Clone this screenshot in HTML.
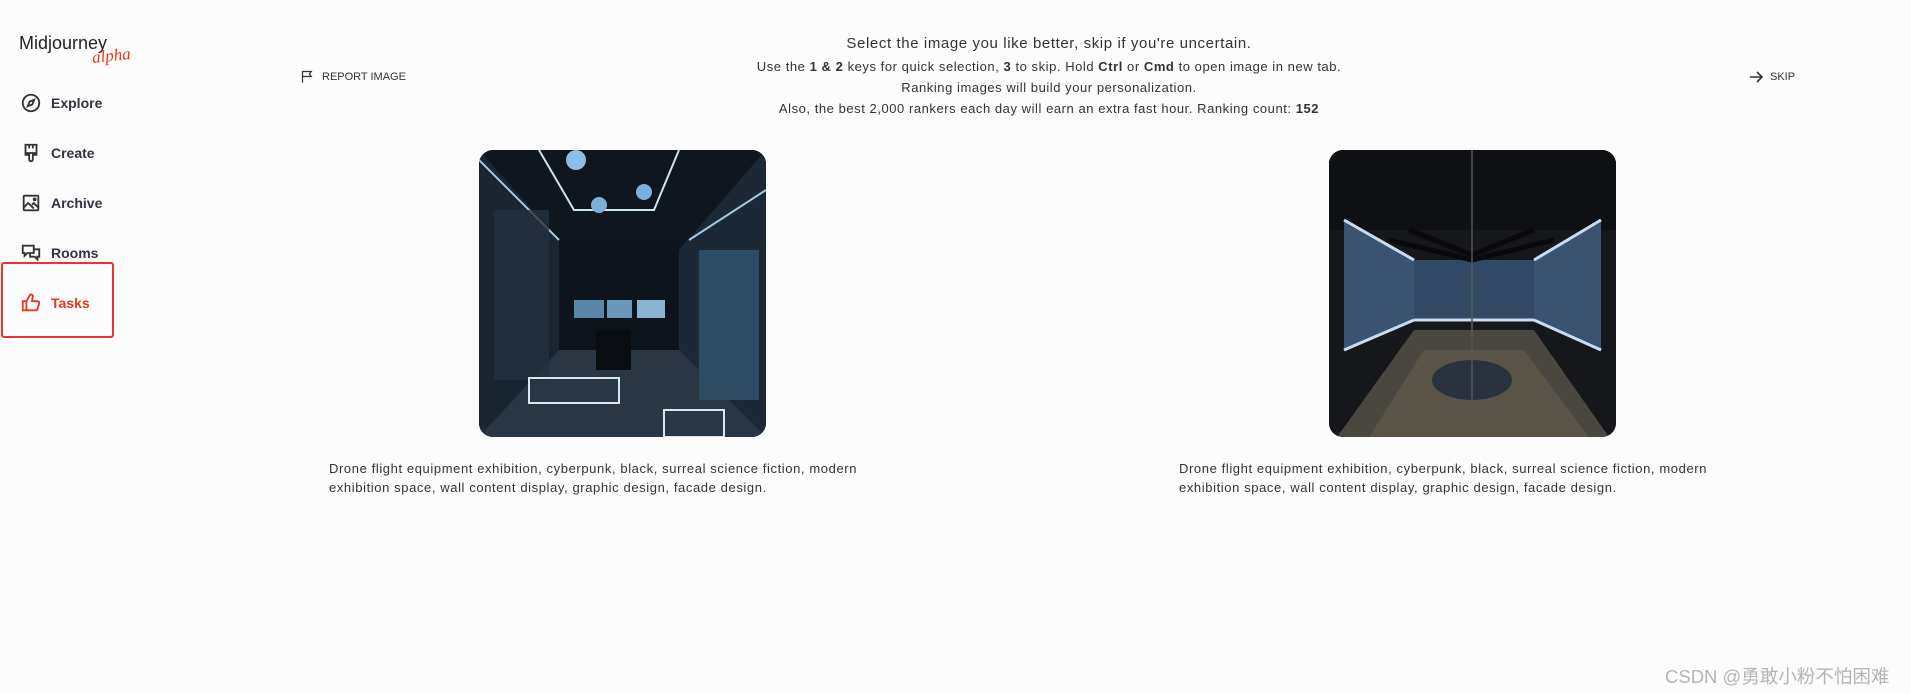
<!DOCTYPE html>
<html><head><meta charset="utf-8"><style>
*{margin:0;padding:0;box-sizing:border-box}
body{width:1911px;height:693px;background:#fcfcfc;font-family:"Liberation Sans",sans-serif;color:#2a2a35;position:relative;overflow:hidden}
.abs{position:absolute;white-space:nowrap}
.nav{position:absolute;left:20px;display:flex;align-items:center;font-size:14px;font-weight:600;color:#333340}
.nav svg{width:22px;height:22px;margin-right:9px}
.c{left:0;width:2098px;text-align:center}
.cap{font-size:13px;line-height:19px;color:#333;width:560px;white-space:normal;letter-spacing:.6px}
.img{position:absolute;top:150px;width:287px;height:287px;border-radius:14px;overflow:hidden}
.h{font-size:13px;color:#333;letter-spacing:.55px}
</style></head><body>
<div class="abs" style="left:19px;top:33px;font-size:18px;color:#222">Midjourney</div>
<div class="abs" style="left:92px;top:46px;font-size:17px;color:#e8381c;font-style:italic;font-family:'Liberation Serif',serif;transform:rotate(-6deg)">alpha</div>

<div class="nav" style="top:92px"><svg viewBox="0 0 24 24" fill="none" stroke="#333" stroke-width="2"><circle cx="12" cy="12" r="9"/><path d="M15.5 8.5l-2 5-5 2 2-5z"/></svg>Explore</div>
<div class="nav" style="top:142px"><svg viewBox="0 0 24 24" fill="none" stroke="#333" stroke-width="2"><path d="M6 3h12v9H6zM6 12v2h4v5a2 2 0 004 0v-5h4v-2M10 3v4M14 3v4"/></svg>Create</div>
<div class="nav" style="top:192px"><svg viewBox="0 0 24 24" fill="none" stroke="#333" stroke-width="2"><rect x="4" y="4" width="16" height="16" rx="1"/><path d="M4 17l5-5 6 6M13 14l2-2 5 5"/><circle cx="16" cy="8" r="1"/></svg>Archive</div>
<div class="nav" style="top:242px"><svg viewBox="0 0 24 24" fill="none" stroke="#333" stroke-width="2"><path d="M3 4h12v8H8l-3 3v-3H3zM15 8h6v8h-2v3l-3-3h-5v-4"/></svg>Rooms</div>
<div class="nav" style="top:292px;color:#e8381c"><svg viewBox="0 0 24 24" fill="none" stroke="#e8381c" stroke-width="2"><path d="M3 10h4v10H3zM7 10l4-7a2 2 0 013 2l-1 5h6a2 2 0 012 2l-2 7a2 2 0 01-2 1H7"/></svg>Tasks</div>
<div style="position:absolute;left:1px;top:262px;width:113px;height:76px;border:2px solid #f0302a;border-radius:3px"></div>

<div class="abs" style="left:300px;top:69px;font-size:11px;font-weight:500;color:#333;display:flex;align-items:center"><svg width="15" height="15" viewBox="0 0 24 24" fill="none" stroke="#333" stroke-width="2" style="margin-right:7px"><path d="M4 22V4h14l-3 4 3 4H4"/></svg>REPORT IMAGE</div>
<div class="abs" style="left:1749px;top:69px;font-size:11px;color:#333;display:flex;align-items:center;height:15px"><svg width="15" height="12" viewBox="0 0 15 12" fill="none" stroke="#333" stroke-width="1.6" style="margin-right:6px"><path d="M1 6h12M8 1l5 5-5 5"/></svg>SKIP</div>

<div class="abs c" style="top:35px;font-size:15px;color:#333;letter-spacing:.6px">Select the image you like better, skip if you're uncertain.</div>
<div class="abs c h" style="top:59px">Use the <b>1 &amp; 2</b> keys for quick selection, <b>3</b> to skip. Hold <b>Ctrl</b> or <b>Cmd</b> to open image in new tab.</div>
<div class="abs c h" style="top:80px">Ranking images will build your personalization.</div>
<div class="abs c h" style="top:101px">Also, the best 2,000 rankers each day will earn an extra fast hour. Ranking count: <b>152</b></div>

<div class="img" style="left:479px;background:#141b24">
<svg width="287" height="287" viewBox="0 0 287 287">
<rect width="287" height="287" fill="#10161e"/>
<polygon points="0,0 80,90 80,200 0,287" fill="#1a2532"/>
<polygon points="287,0 200,100 200,200 287,287" fill="#1c2836"/>
<rect x="80" y="90" width="120" height="110" fill="#0e141b"/>
<polygon points="0,287 80,200 200,200 287,287" fill="#2a3644"/>
<path d="M0 10 L80 90 M287 40 L210 90" stroke="#a8c8e0" stroke-width="2"/>
<path d="M60 0 L95 60 H175 L200 0" stroke="#cfe3f0" stroke-width="2" fill="none"/>
<rect x="15" y="60" width="55" height="170" fill="#23313f" opacity=".8"/>
<rect x="220" y="100" width="60" height="150" fill="#2f4a63"/>
<rect x="95" y="150" width="30" height="18" fill="#5a86a8"/><rect x="128" y="150" width="25" height="18" fill="#6a98b8"/><rect x="158" y="150" width="28" height="18" fill="#8bb4d0"/>
<circle cx="120" cy="55" r="8" fill="#7ab0d8"/><circle cx="165" cy="42" r="8" fill="#7ab0d8"/><circle cx="97" cy="10" r="10" fill="#8cc0e0"/>
<rect x="50" y="228" width="90" height="25" fill="none" stroke="#d8e8f0" stroke-width="2"/>
<rect x="185" y="260" width="60" height="27" fill="none" stroke="#d8e8f0" stroke-width="2"/>
<rect x="117" y="180" width="35" height="40" fill="#0a0e12"/>
</svg></div>

<div class="img" style="left:1329px;background:#111">
<svg width="287" height="287" viewBox="0 0 287 287">
<rect width="287" height="287" fill="#15171b"/>
<rect x="0" y="0" width="287" height="80" fill="#0f1013"/>
<polygon points="15,70 85,110 85,170 15,200" fill="#3a5370"/>
<polygon points="272,70 205,110 205,170 272,200" fill="#3a5370"/>
<rect x="85" y="110" width="120" height="60" fill="#324a66"/>
<path d="M15 70 L85 110 M272 70 L205 110 M85 170 H205 M15 200 L85 170 M272 200 L205 170" stroke="#c8dcf0" stroke-width="3"/>
<polygon points="8,287 85,180 205,180 280,287" fill="#4a4640"/>
<polygon points="40,287 95,200 195,200 260,287" fill="#5a5448"/>
<ellipse cx="143" cy="230" rx="40" ry="20" fill="#2a3240"/>
<path d="M60 90 L143 110 L225 90 M80 80 L143 105 L205 80" stroke="#0a0a0c" stroke-width="5" fill="none"/>
<line x1="143" y1="0" x2="143" y2="270" stroke="#555" stroke-width="1.5"/>
</svg></div>

<div class="abs cap" style="left:329px;top:459px">Drone flight equipment exhibition, cyberpunk, black, surreal science fiction, modern exhibition space, wall content display, graphic design, facade design.</div>
<div class="abs cap" style="left:1179px;top:459px">Drone flight equipment exhibition, cyberpunk, black, surreal science fiction, modern exhibition space, wall content display, graphic design, facade design.</div>

<div class="abs" style="left:1665px;top:663px;font-size:18.5px;color:#b5b5b5;font-family:'Liberation Sans','Noto Sans CJK SC',sans-serif">CSDN @勇敢小粉不怕困难</div>
</body></html>
